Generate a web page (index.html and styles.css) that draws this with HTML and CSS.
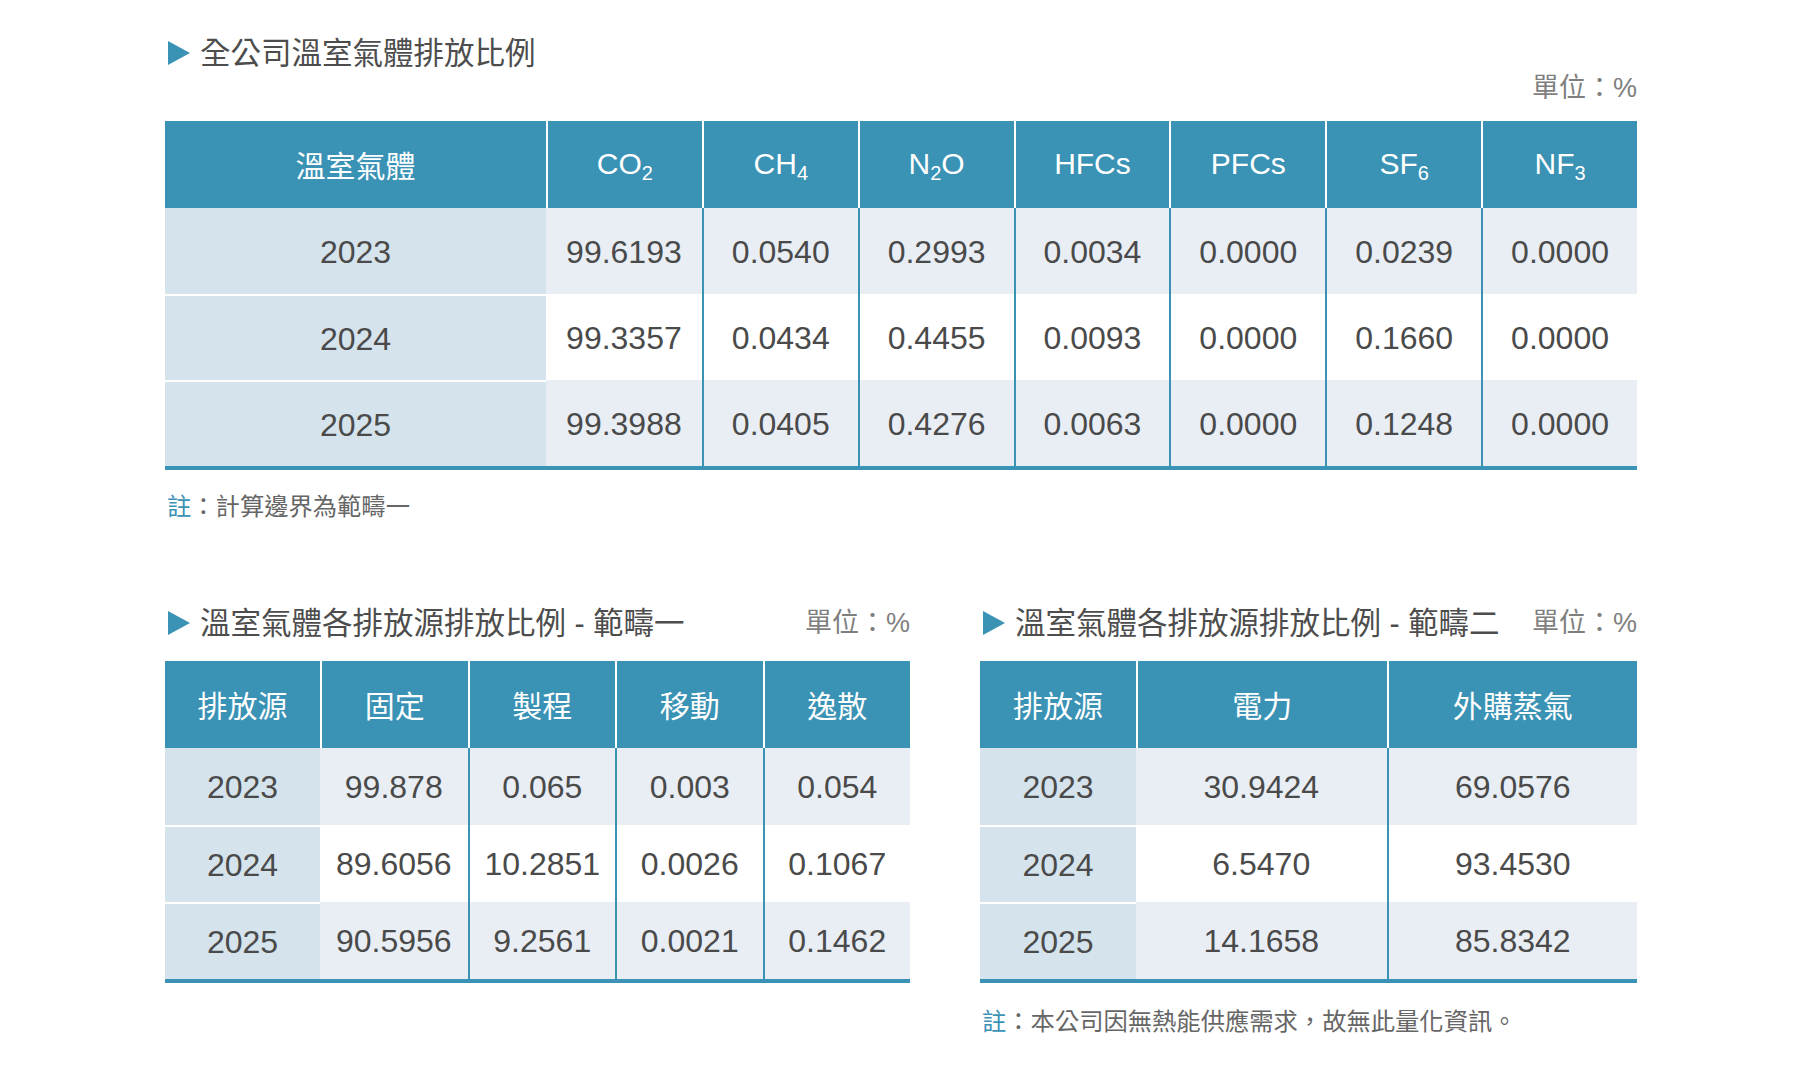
FILE: index.html
```html
<!DOCTYPE html>
<html lang="zh-Hant">
<head>
<meta charset="utf-8">
<title>溫室氣體排放比例</title>
<link rel="stylesheet" href="styles.css">
</head>
<body>
<main class="page">
  <section class="block-top">
    <h2 class="title"><span class="tri"></span>全公司溫室氣體排放比例</h2>
    <div class="unit unit-top">單位：%</div>
    <table class="tbl">
      <colgroup><col class="c-main-first"><col span="7"></colgroup>
      <thead>
        <tr>
          <th>溫室氣體</th>
          <th>CO<sub>2</sub></th>
          <th>CH<sub>4</sub></th>
          <th>N<sub>2</sub>O</th>
          <th>HFCs</th>
          <th>PFCs</th>
          <th>SF<sub>6</sub></th>
          <th>NF<sub>3</sub></th>
        </tr>
      </thead>
      <tbody class="rows-main">
        <tr class="odd"><td class="y">2023</td><td>99.6193</td><td>0.0540</td><td>0.2993</td><td>0.0034</td><td>0.0000</td><td>0.0239</td><td>0.0000</td></tr>
        <tr><td class="y">2024</td><td>99.3357</td><td>0.0434</td><td>0.4455</td><td>0.0093</td><td>0.0000</td><td>0.1660</td><td>0.0000</td></tr>
        <tr class="odd"><td class="y">2025</td><td>99.3988</td><td>0.0405</td><td>0.4276</td><td>0.0063</td><td>0.0000</td><td>0.1248</td><td>0.0000</td></tr>
      </tbody>
    </table>
    <p class="note"><span class="note-key">註</span>：計算邊界為範疇一</p>
  </section>

  <section class="grid-bottom">
    <div class="sub-block">
      <div class="head-row">
        <h2 class="title"><span class="tri"></span>溫室氣體各排放源排放比例 - 範疇一</h2>
        <div class="unit">單位：%</div>
      </div>
      <table class="tbl tbl-left">
        <colgroup><col class="c-src-left"><col span="4"></colgroup>
        <thead>
          <tr><th>排放源</th><th>固定</th><th>製程</th><th>移動</th><th>逸散</th></tr>
        </thead>
        <tbody class="rows-sub">
          <tr class="odd"><td class="y">2023</td><td>99.878</td><td>0.065</td><td>0.003</td><td>0.054</td></tr>
          <tr><td class="y">2024</td><td>89.6056</td><td>10.2851</td><td>0.0026</td><td>0.1067</td></tr>
          <tr class="odd"><td class="y">2025</td><td>90.5956</td><td>9.2561</td><td>0.0021</td><td>0.1462</td></tr>
        </tbody>
      </table>
    </div>
    <div class="sub-block">
      <div class="head-row">
        <h2 class="title"><span class="tri"></span>溫室氣體各排放源排放比例 - 範疇二</h2>
        <div class="unit">單位：%</div>
      </div>
      <table class="tbl tbl-right">
        <colgroup><col class="c-src-right"><col span="2"></colgroup>
        <thead>
          <tr><th>排放源</th><th>電力</th><th>外購蒸氣</th></tr>
        </thead>
        <tbody class="rows-sub">
          <tr class="odd"><td class="y">2023</td><td>30.9424</td><td>69.0576</td></tr>
          <tr><td class="y">2024</td><td>6.5470</td><td>93.4530</td></tr>
          <tr class="odd"><td class="y">2025</td><td>14.1658</td><td>85.8342</td></tr>
        </tbody>
      </table>
      <p class="note note-bottom"><span class="note-key">註</span>：本公司因無熱能供應需求，故無此量化資訊。</p>
    </div>
  </section>
</main>
</body>
</html>
```

FILE: styles.css
```css
html, body {
  margin: 0;
  padding: 0;
  background: #ffffff;
}

body {
  font-family: "Liberation Sans", "Noto Sans CJK TC", sans-serif;
  color: #4a4a4a;
}

.page {
  width: 1472px;
  margin-left: 165px;
  padding-top: 33px;
}

.title {
  display: flex;
  align-items: center;
  gap: 10px;
  margin: 0;
  font-size: 30.5px;
  line-height: 40px;
  height: 40px;
  font-weight: 400;
  color: #4d4d4d;
  white-space: nowrap;
}

.tri {
  display: block;
  flex: none;
  width: 0;
  height: 0;
  margin-left: 3px;
  border-top: 12px solid transparent;
  border-bottom: 12px solid transparent;
  border-left: 22px solid #3a92b5;
}

.unit {
  font-size: 27px;
  line-height: 26px;
  color: #7f7f7f;
  white-space: nowrap;
}

.unit-top {
  text-align: right;
  margin-top: 2px;
}

.tbl {
  width: 100%;
  table-layout: fixed;
  border-collapse: separate;
  border-spacing: 0;
  border-bottom: 4px solid #3a92b5;
}

.block-top .tbl {
  margin-top: 20px;
}

.c-main-first { width: 381px; }
.c-src-left { width: 155px; }
.c-src-right { width: 156px; }

.tbl th {
  background: #3a92b5;
  color: #ffffff;
  font-size: 30px;
  font-weight: 400;
  padding: 0 0 1px 0;
  text-align: center;
  vertical-align: middle;
}

.tbl th + th {
  border-left: 2px solid #ffffff;
}

.tbl thead tr {
  height: 87px;
}

.rows-main tr {
  height: 86px;
}

.rows-sub tr {
  height: 77px;
}

.tbl td {
  padding: 2px 0 0 0;
  text-align: center;
  vertical-align: middle;
  font-size: 32px;
  color: #4a4a4a;
  background: #ffffff;
  white-space: nowrap;
}

.tbl td + td {
  border-left: 2px solid #3a92b5;
}

.tbl td.y + td {
  border-left: 0;
}

.tbl tr.odd td {
  background: #e9eef5;
}

.tbl td.y,
.tbl tr.odd td.y {
  background: #d5e3ec;
}

.tbl tbody tr + tr td.y {
  border-top: 2px solid #ffffff;
}

sub {
  font-size: 20px;
  line-height: 0;
  vertical-align: -6px;
}

.note {
  margin: 22px 0 0 0;
  padding-left: 2px;
  font-size: 24.3px;
  line-height: 30px;
  color: #666666;
}

.note-key {
  color: #3a92b5;
}

.grid-bottom {
  display: grid;
  grid-template-columns: 745px 657px;
  column-gap: 70px;
  align-items: start;
  margin-top: 81px;
}

.head-row {
  display: flex;
  justify-content: space-between;
  align-items: center;
  height: 40px;
  margin-bottom: 18px;
}

.note-bottom {
  margin-top: 24px;
}
```
